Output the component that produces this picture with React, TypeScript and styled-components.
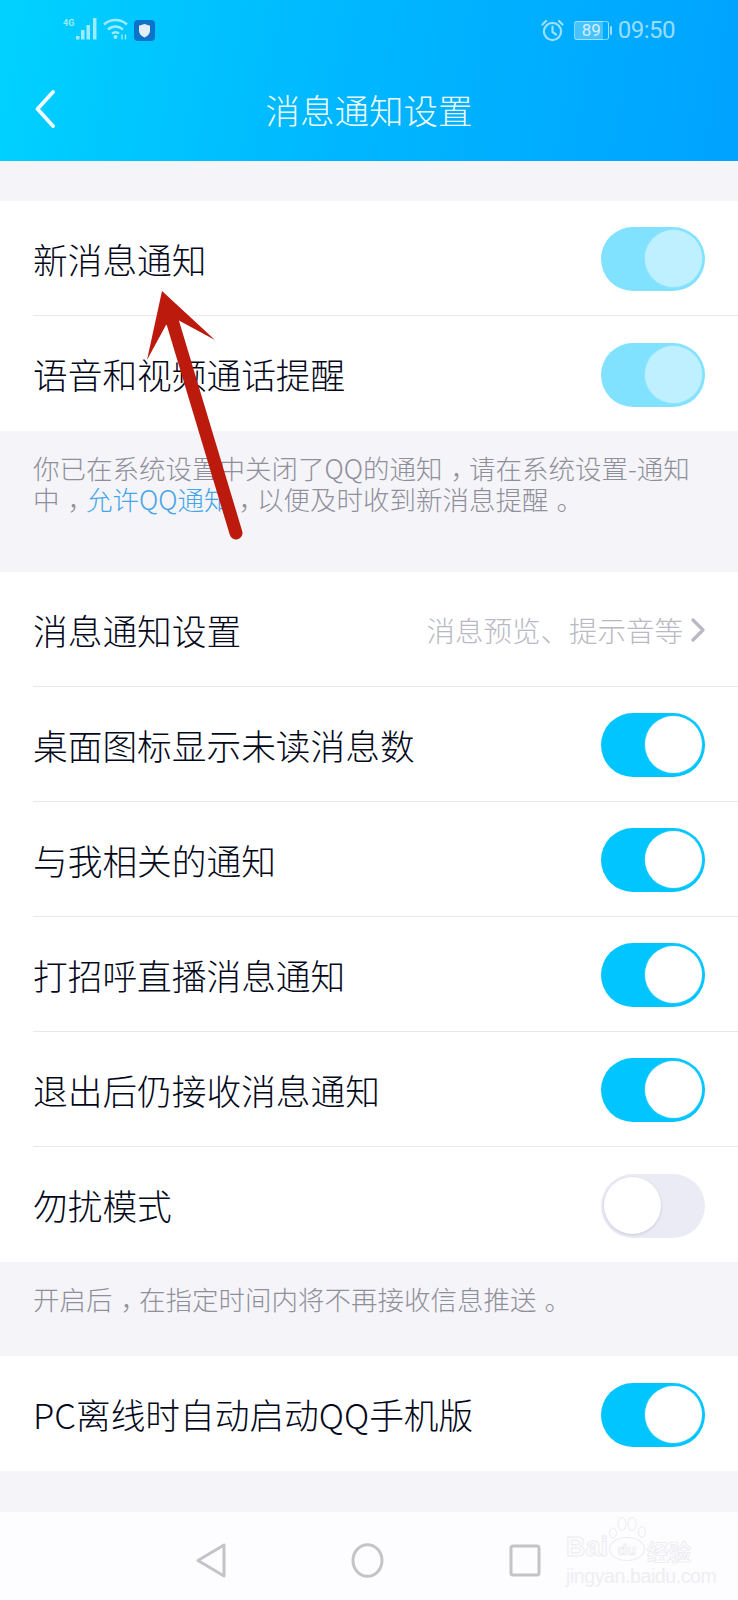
import React from 'react'
import styled, { createGlobalStyle } from 'styled-components'

const GlobalStyle = createGlobalStyle`
  html, body {
    margin: 0;
    padding: 0;
    background: #f5f5f9;
  }
  body {
    font-family: "Noto Sans CJK SC", "Noto Sans", sans-serif;
    font-weight: 300;
  }
`

const Page = styled.div`
  position: relative;
  width: 738px;
  height: 1600px;
  overflow: hidden;
  display: flex;
  flex-direction: column;
  background: #f5f5f9;
`

const Header = styled.header`
  height: 161px;
  flex: none;
  display: flex;
  flex-direction: column;
  background: linear-gradient(100deg, #00d2ff 0%, #00b8ff 45%, #00a3ff 100%);
`

const StatusBar = styled.div`
  height: 60px;
  display: flex;
  align-items: center;
  padding: 0 63px;
  color: rgba(255, 255, 255, 0.62);
`

const StatusGroup = styled.div`
  display: flex;
  align-items: center;
  gap: 5px;
`

const StatusSpacer = styled.div`
  flex: 1;
`

const Battery = styled.span`
  width: 33px;
  height: 17px;
  margin-left: 5px;
  border: 1px solid rgba(255, 255, 255, 0.5);
  border-radius: 3px;
  background: linear-gradient(90deg, rgba(255, 255, 255, 0.28) 86%, transparent 86%);
  display: flex;
  align-items: center;
  justify-content: center;
  font: 400 17px/1 "Roboto", sans-serif;
  color: rgba(255, 255, 255, 0.75);
`

const BatteryCap = styled.span`
  width: 2px;
  height: 9px;
  margin-left: -4px;
  border-radius: 1px;
  background: rgba(255, 255, 255, 0.6);
`

const Clock = styled.span`
  margin-left: 1px;
  font: 400 24px/1 "Roboto", sans-serif;
  letter-spacing: -0.5px;
  color: rgba(255, 255, 255, 0.62);
`

const NavBar = styled.div`
  flex: 1;
  display: grid;
  grid-template-columns: 100px 1fr 100px;
  align-items: center;
  padding-bottom: 3px;
`

const BackButton = styled.div`
  padding-left: 34px;
  display: flex;
`

const Title = styled.h1`
  margin: 0;
  text-align: center;
  font-size: 34.5px;
  line-height: 1;
  font-weight: 300;
  color: rgba(255, 255, 255, 0.96);
`

const Section = styled.section<{ $top?: number }>`
  margin-top: ${p => p.$top ?? 0}px;
  background: #fff;
  flex: none;
`

const Row = styled.div`
  height: 115px;
  box-sizing: border-box;
  margin-left: 33px;
  padding: 2px 33px 0 0;
  display: flex;
  align-items: center;
  justify-content: space-between;
  border-bottom: 1px solid #e8e8ec;
  &:last-child {
    border-bottom: none;
  }
`

const RowLabel = styled.span`
  font-size: 34.7px;
  line-height: 1;
  color: #03081a;
`

const RowValue = styled.span`
  display: flex;
  align-items: center;
  gap: 8px;
  font-size: 28.5px;
  line-height: 1;
  color: #b9b9c4;
`

const Track = styled.div<{ $on: boolean; $dim: boolean }>`
  width: 104px;
  height: 64px;
  box-sizing: border-box;
  padding: 3px;
  border-radius: 32px;
  display: flex;
  justify-content: ${p => (p.$on ? 'flex-end' : 'flex-start')};
  background: ${p => (!p.$on ? '#ebebf6' : p.$dim ? '#80e2ff' : '#00c5ff')};
`

const Knob = styled.div<{ $on: boolean; $dim: boolean }>`
  width: 57px;
  height: 57px;
  border-radius: 50%;
  background: ${p => (p.$dim ? '#bff0ff' : '#fff')};
  box-shadow: ${p => (p.$on ? '0 0 2px rgba(255, 255, 255, 0.4)' : '0 1px 3px rgba(120, 120, 150, 0.3)')};
`

const Hint = styled.div<{ $height: number }>`
  height: ${p => p.$height}px;
  flex: none;
  box-sizing: border-box;
  padding: 21px 33px 0;
  font-size: 26.5px;
  line-height: 31px;
  color: #8f8f99;
`

const HintLine = styled.div`
  white-space: nowrap;
`

const HintLink = styled.span`
  color: #45a5e8;
`

// the phone's font centres fullwidth punctuation in its cell
const Punct = styled.span`
  margin-left: 8px;
  letter-spacing: -8px;
`

const BottomNav = styled.nav`
  margin-top: 41px;
  flex: 1;
  background: #fdfcfe;
  display: flex;
  align-items: center;
  padding: 8px 0 0 196px;
  gap: 125px;
`

const Arrow = styled.svg`
  position: absolute;
  left: 130px;
  top: 280px;
`

const Watermark = styled.div`
  position: absolute;
  left: 566px;
  top: 1520px;
  width: 134px;
  color: #fdfcfe;
  -webkit-text-stroke: 1px #ececf0;
`

const WatermarkBrand = styled.div`
  display: flex;
  align-items: flex-end;
  height: 41px;
  font: 700 27px/1 "Liberation Sans", sans-serif;
`

const WatermarkDu = styled.span`
  position: relative;
  width: 36px;
  height: 24px;
  margin: 0 2px 0 1px;
  border: 1px solid #ececf0;
  border-radius: 50%;
  box-sizing: border-box;
  display: flex;
  align-items: center;
  justify-content: center;
  font: 700 15px/1 "Liberation Sans", sans-serif;
  -webkit-text-stroke: 0.6px #e6e6eb;
`

const WatermarkToes = styled.svg`
  position: absolute;
  left: -1px;
  top: -22px;
`

const WatermarkCn = styled.span`
  font: 700 22px/1 "Noto Sans CJK SC", sans-serif;
  -webkit-text-stroke: 0.7px #e9e9ee;
`

const WatermarkUrl = styled.div`
  margin-top: 6px;
  font: 400 19.5px/1 "Liberation Sans", sans-serif;
  letter-spacing: -0.4px;
  white-space: nowrap;
  color: #eeeef2;
  -webkit-text-stroke: 0;
`

const Toggle = ({ on = true, dim = false }: { on?: boolean; dim?: boolean }) => (
  <Track $on={on} $dim={dim}>
    <Knob $on={on} $dim={dim} />
  </Track>
)

const App = () => {
  return (
    <Page>
      <GlobalStyle />
      <Header>
        <StatusBar>
          <StatusGroup>
            <svg width="35" height="24" viewBox="0 0 35 24">
              <text x="0" y="8" fontSize="9" fontWeight="700" fontFamily="Roboto" fill="currentColor">4G</text>
              <g fill="currentColor">
                <rect x="13" y="18" width="3.5" height="3.5" />
                <rect x="18" y="12" width="3.5" height="9.5" />
                <rect x="23.5" y="7" width="3.5" height="14.5" />
                <rect x="30" y="0" width="3.5" height="21.5" />
              </g>
            </svg>
            <svg width="26" height="24" viewBox="0 0 26 24" fill="none" stroke="currentColor" strokeWidth="2.4">
              <path d="M1 6.5C7.5 0.5 17.5 0.5 24 6.5" />
              <path d="M5 11.5C9.5 7.5 15.5 7.5 20 11.5" />
              <path d="M9 15.5C11 14 14 14 16 15.5" />
              <circle cx="12.5" cy="19" r="2" fill="currentColor" stroke="none" />
              <path d="M19 16.5v5M22.5 16.5v5" strokeWidth="1.4" />
            </svg>
            <svg width="21" height="21" viewBox="0 0 21 21">
              <rect width="21" height="21" rx="4" fill="#0b74c9" />
              <path d="M10.5 4L16 5.8V10.5C16 13.8 13.8 16 10.5 17.5C7.2 16 5 13.8 5 10.5V5.8Z" fill="#e3eef8" />
            </svg>
          </StatusGroup>
          <StatusSpacer />
          <StatusGroup>
            <svg width="23" height="23" viewBox="0 0 23 23" fill="none" stroke="currentColor" strokeWidth="2.2" strokeLinecap="round">
              <circle cx="11.5" cy="12.5" r="8.6" />
              <path d="M11.5 7.5V13L15 15.5" />
              <path d="M1.5 5.5L5 2M21.5 5.5L18 2" />
            </svg>
            <Battery>89</Battery>
            <BatteryCap />
            <Clock>09:50</Clock>
          </StatusGroup>
        </StatusBar>
        <NavBar>
          <BackButton>
            <svg width="24" height="38" viewBox="0 0 24 38" fill="none" stroke="#fff" strokeOpacity="0.94" strokeWidth="3.8" strokeLinecap="round" strokeLinejoin="round">
              <path d="M19 2L3.5 19L19 36" />
            </svg>
          </BackButton>
          <Title>消息通知设置</Title>
        </NavBar>
      </Header>

      <Section $top={40}>
        <Row>
          <RowLabel>新消息通知</RowLabel>
          <Toggle dim />
        </Row>
        <Row>
          <RowLabel>语音和视频通话提醒</RowLabel>
          <Toggle dim />
        </Row>
      </Section>
      <Hint $height={141}>
        <HintLine>你已在系统设置中关闭了QQ的通知<Punct>，</Punct>请在系统设置-通知</HintLine>
        <HintLine>中<Punct>，</Punct><HintLink>允许QQ通知</HintLink><Punct>，</Punct>以便及时收到新消息提醒<Punct>。</Punct></HintLine>
      </Hint>

      <Section>
        <Row>
          <RowLabel>消息通知设置</RowLabel>
          <RowValue>
            消息预览、提示音等
            <svg width="14" height="24" viewBox="0 0 14 24" fill="none" stroke="#b9b9c4" strokeWidth="3.2" strokeLinecap="round" strokeLinejoin="round">
              <path d="M2 2L12 12L2 22" />
            </svg>
          </RowValue>
        </Row>
        <Row>
          <RowLabel>桌面图标显示未读消息数</RowLabel>
          <Toggle />
        </Row>
        <Row>
          <RowLabel>与我相关的通知</RowLabel>
          <Toggle />
        </Row>
        <Row>
          <RowLabel>打招呼直播消息通知</RowLabel>
          <Toggle />
        </Row>
        <Row>
          <RowLabel>退出后仍接收消息通知</RowLabel>
          <Toggle />
        </Row>
        <Row>
          <RowLabel>勿扰模式</RowLabel>
          <Toggle on={false} />
        </Row>
      </Section>
      <Hint $height={94}>
        <HintLine>开启后<Punct>，</Punct>在指定时间内将不再接收信息推送<Punct>。</Punct></HintLine>
      </Hint>

      <Section>
        <Row>
          <RowLabel>PC离线时自动启动QQ手机版</RowLabel>
          <Toggle />
        </Row>
      </Section>

      <BottomNav>
        <svg width="30" height="35" viewBox="0 0 30 35" fill="none" stroke="#c4c4c8" strokeWidth="3" strokeLinejoin="round">
          <path d="M28 2V33L2 17.5Z" />
        </svg>
        <svg width="33" height="35" viewBox="0 0 33 35" fill="none" stroke="#c4c4c8" strokeWidth="3">
          <ellipse cx="16.5" cy="17.5" rx="14.5" ry="15.8" />
        </svg>
        <svg width="32" height="33" viewBox="0 0 32 33" fill="none" stroke="#c4c4c8" strokeWidth="3" strokeLinejoin="round">
          <rect x="2" y="2" width="28" height="29" rx="2" />
        </svg>
      </BottomNav>

      <Watermark>
        <WatermarkBrand>
          Bai
          <WatermarkDu>
            du
            <WatermarkToes width="38" height="24" viewBox="0 0 38 24" fill="none" stroke="#ececf0" strokeWidth="1">
              <ellipse cx="4" cy="17" rx="3.5" ry="5" />
              <ellipse cx="13" cy="8" rx="4" ry="6.5" />
              <ellipse cx="23" cy="8" rx="4" ry="6.5" />
              <ellipse cx="33" cy="16" rx="3.5" ry="5.5" />
            </WatermarkToes>
          </WatermarkDu>
          <WatermarkCn>经验</WatermarkCn>
        </WatermarkBrand>
        <WatermarkUrl>jingyan.baidu.com</WatermarkUrl>
      </Watermark>

      <Arrow width="120" height="265" viewBox="0 0 120 265">
        <path d="M32 11L85 60L48 40L40 44L36 45L17 80Z" fill="#bb1a0c" />
        <path d="M42 40L106 253" stroke="#bb1a0c" strokeWidth="13" strokeLinecap="round" fill="none" />
      </Arrow>
    </Page>
  )
}

export default App
